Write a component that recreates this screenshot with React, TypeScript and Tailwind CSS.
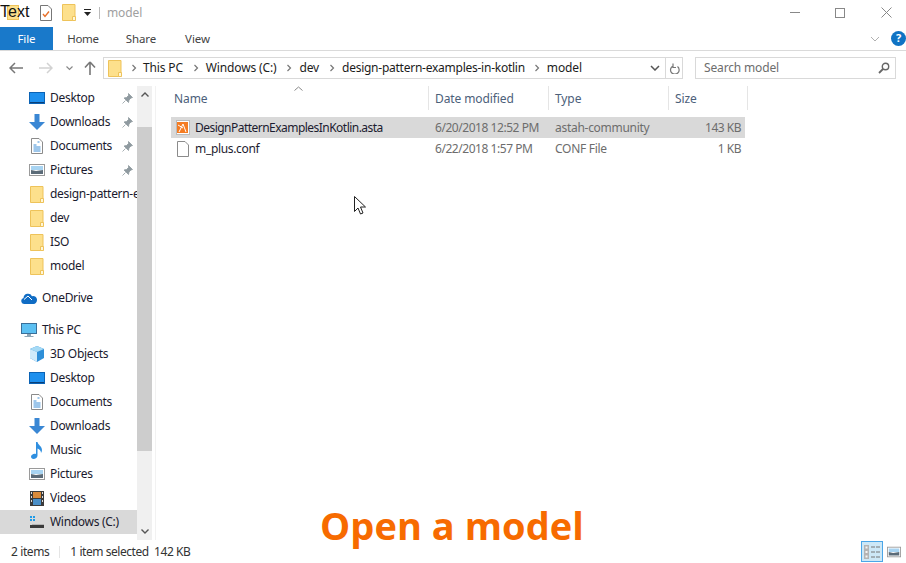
import React from "react";

const font = { fontFamily: '"Noto Sans", "Open Sans", sans-serif' };

function Folder({ className = "" }: { className?: string }) {
  return (
    <svg width="14" height="17" viewBox="0 0 14 17" className={className}>
      <path d="M.5.5h12.5v16H.5z" fill="#fde08c" stroke="#eec35a" />
      <path d="M10.5 16.5v-4h3v4z" fill="#fff6d8" stroke="#eec35a" />
    </svg>
  );
}
function Desktop() {
  return (
    <svg width="16" height="12" viewBox="0 0 16 12">
      <rect x=".5" y=".5" width="15" height="11" fill="#1e90ee" stroke="#0b63b5" />
      <rect x="1" y="10" width="14" height="1" fill="#0a3f78" />
    </svg>
  );
}
function Down() {
  return (
    <svg width="16" height="16" viewBox="0 0 16 16">
      <path d="M5.500 0h5v8H16l-8 8-8-8h5.500z" fill="#3a87d4" />
    </svg>
  );
}
function Doc() {
  return (
    <svg width="12" height="16" viewBox="0 0 12 16">
      <path d="M.5.5h7.500l3.500 3.500v11.500H.5z" fill="#fff" stroke="#8b8b8b" />
      <path d="M2.500 7h3M2.500 9h7M2.500 11h7M2.500 13h7M6.500 4h2" stroke="#3d8ed6" />
    </svg>
  );
}
function Pic() {
  return (
    <svg width="16" height="12" viewBox="0 0 16 12">
      <rect x=".5" y=".5" width="15" height="11" fill="#fff" stroke="#9a9a9a" />
      <rect x="2" y="2" width="12" height="4" fill="#a8d4f2" />
      <path d="M2 6l5 1 7-1v4H2z" fill="#5b6b78" />
    </svg>
  );
}
function Pin() {
  return (
    <svg width="11" height="11" viewBox="0 0 11 11">
      <path d="M6.500.5l4 4-1.500.5-2 2-.5 2.500L2 5l2.500-.5 2-2zM3.500 7.500L.5 10.500" fill="#8f9aa0" stroke="#8f9aa0" strokeWidth=".8" />
    </svg>
  );
}
function Cube() {
  return (
    <svg width="16" height="16" viewBox="0 0 16 16">
      <path d="M8 0l7 3v9l-7 4-7-4V3z" fill="#2f8fd8" />
      <path d="M8 0l7 3-7 3-7-3z" fill="#a6daf5" />
      <path d="M1 3l7 3v10l-7-4z" fill="#cfeafa" />
    </svg>
  );
}
function Music() {
  return (
    <svg width="12" height="17" viewBox="0 0 12 17">
      <path d="M5 0h1.500c.5 3 4.500 4 4.500 8 0 1-.3 2-1 3 .2-2-1.500-4-3.500-4.500V13.500C6.500 15.500 4.500 17 2.500 17 1 17 0 16 0 14.800 0 13 2 11.700 3.500 11.700c.6 0 1.100.1 1.500.3z" fill="#2f8fe0" />
    </svg>
  );
}
function Film() {
  return (
    <svg width="14" height="15" viewBox="0 0 14 15">
      <rect width="14" height="15" fill="#3b3b3b" />
      <rect x="3" y="1" width="8" height="6" fill="#d98a3a" />
      <rect x="3" y="8" width="8" height="6" fill="#4a8fc8" />
      <path d="M1 1h1v2H1zM1 5h1v2H1zM1 9h1v2H1zM12 1h1v2h-1zM12 5h1v2h-1zM12 9h1v2h-1z" fill="#ddd" />
    </svg>
  );
}
function Drive() {
  return (
    <svg width="16" height="14" viewBox="0 0 16 14">
      <path d="M1 1h2v2H1zM4 1h2v2H4zM1 4h2v2H1zM4 4h2v2H4z" fill="#1e9be8" />
      <rect x="1" y="10" width="14" height="3" fill="#3a3a3a" />
      <rect x="3" y="9" width="12" height="1" fill="#b5b5b5" />
    </svg>
  );
}
function Monitor() {
  return (
    <svg width="16" height="15" viewBox="0 0 16 15">
      <rect x=".5" y=".5" width="15" height="10" fill="#5cc0f2" stroke="#3a6f99" />
      <path d="M6 11h4v2H6zM3.500 13h9v1h-9z" fill="#8fa6b6" />
    </svg>
  );
}
function Cloud() {
  return (
    <svg width="16" height="11" viewBox="0 0 16 11">
      <path d="M3 11a3 3 0 0 1-.5-5.900A4.500 4.500 0 0 1 11 3.200 3.800 3.800 0 0 1 16 7c0 2-1.500 4-3.500 4z" fill="#0f6cc4" />
      <path d="M3 6.500L7 3l4 4" stroke="#fff" fill="none" />
    </svg>
  );
}

function NavRow({
  icon,
  label,
  pin,
  selected,
  level = 1,
}: {
  icon: React.ReactNode;
  label: string;
  pin?: boolean;
  selected?: boolean;
  level?: number;
}) {
  return (
    <div className={`h-6 flex items-center relative overflow-hidden ${selected ? "bg-[#d9d9d9]" : ""}`}>
      <div className={`flex items-center justify-center shrink-0 w-4 ${level === 1 ? "ml-[29px] mr-[5px]" : "ml-[21px] mr-[5px]"}`}>{icon}</div>
      <span className="text-[12px] text-[#1a1a2e] whitespace-nowrap tracking-[-0.3px]">{label}</span>
      {pin && (
        <span className="absolute left-[122px] top-[7px]">
          <Pin />
        </span>
      )}
    </div>
  );
}

function Chevron() {
  return (
    <svg width="6" height="8" viewBox="0 0 6 8" className="shrink-0">
      <path d="M1.500 1l3 3-3 3" fill="none" stroke="#777" strokeWidth="1.200" />
    </svg>
  );
}

function Header({ label, width }: { label: string; width: string }) {
  return (
    <div className={`h-6 flex items-center border-r border-[#e5e5e5] pt-[2px] ${width}`}>
      <span className="text-[12px] text-[#4c607a] tracking-[-0.1px]">{label}</span>
    </div>
  );
}

function FileRow({
  icon,
  name,
  nameTracking,
  date,
  type,
  size,
  selected,
}: {
  icon: React.ReactNode;
  name: string;
  nameTracking: string;
  date: string;
  type: string;
  size: string;
  selected?: boolean;
}) {
  return (
    <div className={`h-[21px] flex items-center w-[574px] text-[12px] ${selected ? "bg-[#d9d9d9]" : ""}`}>
      <div className="w-6 pl-[5px] flex items-center shrink-0">{icon}</div>
      <div className={`w-[240px] text-[#1c1c30] whitespace-nowrap ${nameTracking}`}>{name}</div>
      <div className="w-[120px] text-[#6d6d6d] whitespace-nowrap tracking-[-0.45px]">{date}</div>
      <div className="w-[112px] text-[#6d6d6d] whitespace-nowrap tracking-[-0.28px]">{type}</div>
      <div className="w-[74px] text-right text-[#6d6d6d] whitespace-nowrap tracking-[-0.5px]">{size}</div>
    </div>
  );
}

export default function App() {
  return (
    <div className="w-[906px] h-[563px] bg-white relative overflow-hidden flex flex-col" style={font}>
      {/* Title bar */}
      <div className="h-[25px] mb-[2px] flex items-center shrink-0 relative">
        <div className="ml-[7px] w-[12px] h-[15px] bg-[#fde08c] border border-[#eec35a]" />
        <div className="ml-[21px]">
          <svg width="12" height="16" viewBox="0 0 12 16">
            <path d="M.5.500h7.500l3.500 3.500v11.500H.5z" fill="#fff" stroke="#777" />
            <path d="M3 9l2 2.500L9 6.500" fill="none" stroke="#e8702a" strokeWidth="1.400" />
          </svg>
        </div>
        <Folder className="ml-[10px]" />
        <svg width="7" height="7" viewBox="0 0 7 7" className="ml-[8px]">
          <path d="M0 0h7v1H0zM0 3h7L3.500 7z" fill="#222" />
        </svg>
        <div className="ml-[8px] w-px h-[12px] bg-[#bbb]" />
        <span className="ml-[7px] text-[12px] text-[#a0a0a0] tracking-[-0.1px]">model</span>
        <div className="ml-auto flex items-center">
          <div className="w-[10px] h-px bg-[#888] mr-[35px]" />
          <div className="w-[10px] h-[10px] border border-[#888] mr-[36px]" />
          <svg width="11" height="11" viewBox="0 0 11 11" className="mr-[14px]">
            <path d="M.5.500l10 10M10.500.500l-10 10" stroke="#888" />
          </svg>
        </div>
      </div>

      {/* Tabs */}
      <div className="h-[24px] flex items-stretch border-b border-[#dadada] shrink-0 text-[11.500px] text-[#444]">
        <div className="w-[53px] bg-[#1979ca] text-white flex items-center justify-center tracking-[-0.1px]">File</div>
        <div className="w-[60px] flex items-center justify-center tracking-[-0.3px]">Home</div>
        <div className="w-[56px] flex items-center justify-center tracking-[-0.1px]">Share</div>
        <div className="w-[57px] flex items-center justify-center tracking-[-0.1px]">View</div>
        <div className="ml-auto flex items-center">
          <svg width="10" height="6" viewBox="0 0 10 6" className="mr-[11px]">
            <path d="M1 1l4 4 4-4" fill="none" stroke="#b0b0b0" />
          </svg>
          <div className="w-[15px] h-[15px] rounded-full bg-[#1073c4] text-white text-[11px] font-bold flex items-center justify-center">?</div>
        </div>
      </div>

      {/* Address row */}
      <div className="h-[34px] mb-px flex items-center shrink-0">
        <svg width="14" height="12" viewBox="0 0 14 12" className="ml-[9px]">
          <path d="M6 1L1 6l5 5M1 6h13" fill="none" stroke="#777" strokeWidth="1.500" />
        </svg>
        <svg width="14" height="12" viewBox="0 0 14 12" className="ml-[16px]">
          <path d="M8 1l5 5-5 5M13 6H0" fill="none" stroke="#d2d2d2" strokeWidth="1.500" />
        </svg>
        <svg width="7" height="5" viewBox="0 0 7 5" className="ml-[13px]">
          <path d="M.5.500l3 3 3-3" fill="none" stroke="#888" strokeWidth="1.200" />
        </svg>
        <svg width="12" height="14" viewBox="0 0 12 14" className="ml-[11px]">
          <path d="M6 1L1 6.500M6 1l5 5.500M6 1v13" fill="none" stroke="#777" strokeWidth="1.600" />
        </svg>
        <div className="ml-[7px] w-[580px] h-[22px] border border-[#d9d9d9] flex items-center text-[12px] text-[#1c1c1c] tracking-[-0.15px]">
          <Folder className="ml-[4px] mr-[9px]" />
          <Chevron />
          <span className="ml-[6px] mr-[10px]">This PC</span>
          <Chevron />
          <span className="ml-[7px] mr-[10px]">Windows (C:)</span>
          <Chevron />
          <span className="ml-[7px] mr-[10px]">dev</span>
          <Chevron />
          <span className="ml-[7px] mr-[9px] tracking-[-0.25px]">design-pattern-examples-in-kotlin</span>
          <Chevron />
          <span className="ml-[7px]">model</span>
          <svg width="10" height="6" viewBox="0 0 10 6" className="ml-auto mr-[5px]">
            <path d="M1 1l4 4 4-4" fill="none" stroke="#555" strokeWidth="1.500" />
          </svg>
          <div className="h-full w-[17px] border-l border-[#d9d9d9] flex items-center justify-center">
            <svg width="11" height="12" viewBox="0 0 11 12">
              <path d="M8.500 3.500A4.300 4.300 0 1 1 4 3M4 .5V4.500H7" fill="none" stroke="#777" strokeWidth="1.200" transform="translate(0 1)" />
            </svg>
          </div>
        </div>
        <div className="ml-[12px] w-[201px] h-[22px] border border-[#d9d9d9] flex items-center pl-[8px] text-[12px] text-[#6d6d6d] tracking-[-0.15px]">
          Search model
          <svg width="12" height="12" viewBox="0 0 12 12" className="ml-auto mr-[5px]">
            <circle cx="7.500" cy="4.500" r="3.200" fill="none" stroke="#666" strokeWidth="1.400" />
            <path d="M5 7l-4 4" stroke="#666" strokeWidth="1.800" />
          </svg>
        </div>
      </div>

      {/* Main */}
      <div className="flex-1 flex min-h-0">
        {/* Sidebar */}
        <div className="w-[137px] shrink-0 flex flex-col">
          <NavRow icon={<Desktop />} label="Desktop" pin />
          <NavRow icon={<Down />} label="Downloads" pin />
          <NavRow icon={<Doc />} label="Documents" pin />
          <NavRow icon={<Pic />} label="Pictures" pin />
          <NavRow icon={<Folder />} label="design-pattern-examples" />
          <NavRow icon={<Folder />} label="dev" />
          <NavRow icon={<Folder />} label="ISO" />
          <NavRow icon={<Folder />} label="model" />
          <div className="h-2" />
          <NavRow icon={<Cloud />} label="OneDrive" level={0} />
          <div className="h-2" />
          <NavRow icon={<Monitor />} label="This PC" level={0} />
          <NavRow icon={<Cube />} label="3D Objects" />
          <NavRow icon={<Desktop />} label="Desktop" />
          <NavRow icon={<Doc />} label="Documents" />
          <NavRow icon={<Down />} label="Downloads" />
          <NavRow icon={<Music />} label="Music" />
          <NavRow icon={<Pic />} label="Pictures" />
          <NavRow icon={<Film />} label="Videos" />
          <NavRow icon={<Drive />} label="Windows (C:)" selected />
        </div>
        {/* Scrollbar */}
        <div className="w-[15px] shrink-0 bg-[#f0f0f0] flex flex-col h-[454px]">
          <div className="h-[17px] flex items-center justify-center">
            <svg width="8" height="5" viewBox="0 0 8 5">
              <path d="M.5 4.500L4 1l3.500 3.500" fill="none" stroke="#555" strokeWidth="1.400" />
            </svg>
          </div>
          <div className="mt-[24px] h-[324px] bg-[#cdcdcd]" />
          <div className="mt-auto h-[17px] flex items-center justify-center">
            <svg width="8" height="5" viewBox="0 0 8 5">
              <path d="M.5.500L4 4l3.500-3.500" fill="none" stroke="#555" strokeWidth="1.400" />
            </svg>
          </div>
        </div>
        {/* Files */}
        <div className="flex-1 min-w-0 border-l border-[#f2f2f2] ml-[3px] pl-[18px] relative">
          <div className="flex h-6">
            <Header label="Name" width="w-[255px]" />
            <Header label="Date modified" width="w-[120px] pl-[6px]" />
            <Header label="Type" width="w-[120px] pl-[6px]" />
            <Header label="Size" width="w-[79px] pl-[6px]" />
          </div>
          <svg width="9" height="5" viewBox="0 0 9 5" className="absolute left-[138px] top-0">
            <path d="M.5 4.500l4-3.500 4 3.500" fill="none" stroke="#888" />
          </svg>
          <div className="mt-[7px] -ml-[3px]">
            <FileRow
              selected
              nameTracking="tracking-[-0.53px]"
              icon={
                <svg width="14" height="15" viewBox="0 0 14 15">
                  <rect x=".5" y=".5" width="13" height="14" fill="#fff" stroke="#bbb" />
                  <rect x="1" y="2" width="11" height="11" fill="#f57c22" />
                  <path d="M3 12l4-8 3 8M2 5l5 3" stroke="#fff" fill="none" />
                </svg>
              }
              name="DesignPatternExamplesInKotlin.asta"
              date="6/20/2018 12:52 PM"
              type="astah-community"
              size="143 KB"
            />
            <FileRow
              nameTracking="tracking-[-0.33px]"
              icon={
                <svg width="12" height="16" viewBox="0 0 12 16" className="ml-[1px]">
                  <path d="M.5.500h7.500l3.500 3.500v11.500H.5z" fill="#fff" stroke="#8b8b8b" />
                </svg>
              }
              name="m_plus.conf"
              date="6/22/2018 1:57 PM"
              type="CONF File"
              size="1 KB"
            />
          </div>
        </div>
      </div>

      {/* Status */}
      <div className="h-[23px] shrink-0 flex items-center text-[12px] text-[#333] pl-[11px]">
        <span className="tracking-[-0.4px]">2 items</span>
        <div className="w-px h-[12px] bg-[#e5e5e5] ml-[10px] mr-[10px]" />
        <span className="tracking-[-0.45px]">1 item selected&nbsp; 142 KB</span>
        <div className="ml-auto flex items-center mr-[5px]">
          <div className="w-[22px] h-[21px] border border-[#4ba6e8] bg-[#cde8f7] flex items-center justify-center">
            <svg width="16" height="14" viewBox="0 0 16 14">
              <rect width="5" height="14" fill="#b4b4b4" />
              <path d="M1.500 1.500h2v2h-2zM1.500 6h2v2h-2zM1.500 10.500h2v2h-2z" fill="#f4f4f4" />
              <path d="M7 2h4M12 2h4M7 7h4M12 7h4M7 12h4M12 12h4" stroke="#777" />
            </svg>
          </div>
          <div className="w-[14px] h-[12px] ml-[4px] flex items-center">
            <Pic />
          </div>
        </div>
      </div>

      {/* Overlays */}
      <div className="absolute left-0 top-[3px] text-[16px] text-[#111] leading-[18px]" style={{ fontFamily: '"Liberation Sans", sans-serif' }}>
        Text
      </div>
      <svg width="13" height="20" viewBox="0 0 13 20" className="absolute left-[354px] top-[196px]">
        <path d="M.5.500v15l3.500-3.500 2.500 6 2.500-1-2.500-6h5z" fill="#fff" stroke="#222" />
      </svg>
      <div className="absolute left-[320px] top-[501px] text-[38px] font-bold text-[#f76b00] leading-[48px] whitespace-nowrap tracking-[0.05px]" style={{ fontFamily: '"Open Sans", sans-serif' }}>
        Open a model
      </div>
    </div>
  );
}
